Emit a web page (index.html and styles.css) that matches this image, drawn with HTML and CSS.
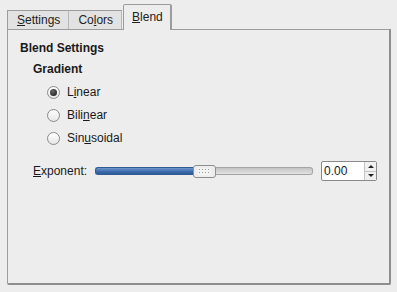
FILE: index.html
```html
<!doctype html>
<html lang="en">
<head>
	<meta charset="UTF-8">
	<title>Blend</title>
	<link rel="stylesheet" href="styles.css">
</head>
<body>
	<div id="notebook">
		<div class="tabs">
			<div class="tab"><u>S</u>ettings</div>
			<div class="tab">Co<u>l</u>ors</div>
			<div class="tab active"><u>B</u>lend</div>
		</div>
		<div class="panel">
			<div class="title">Blend Settings</div>
			<div class="group">
				<div class="subtitle">Gradient</div>
				<div class="radios">
					<label class="radio"><span class="dot checked"></span><span>L<u>i</u>near</span></label>
					<label class="radio"><span class="dot"></span><span>Bili<u>n</u>ear</span></label>
					<label class="radio"><span class="dot"></span><span>Sin<u>u</u>soidal</span></label>
				</div>
				<div class="row">
					<span class="label"><u>E</u>xponent:</span>
					<div class="scale">
						<div class="fill"></div>
						<div class="thumb"></div>
						<div class="rest"></div>
					</div>
					<div class="spin">
						<span class="value">0.00</span>
						<div class="arrows">
							<span class="up"></span>
							<span class="down"></span>
						</div>
					</div>
				</div>
			</div>
		</div>
	</div>
</body>
</html>
```
FILE: styles.css
```css
body{
	margin: 0;
	background: #ededed;
	font-family: "Liberation Sans", Arial, sans-serif;
	font-size: 12px;
	color: #1a1a1a;
}
#notebook{
	padding: 4px 6px 0 7px;
}
.tabs{
	display: flex;
	align-items: flex-end;
	height: 25px;
}
.tab{
	height: 19px;
	line-height: 19px;
	padding: 0 8px 0 9px;
	border: 1px solid #9c9c9c;
	border-bottom: none;
	border-right-color: #b8b8b8;
	background: #e2e2e2;
	box-sizing: border-box;
	color: #222;
}
.tab + .tab{
	border-left: none;
}
.tab.active{
	height: 26px;
	line-height: 24px;
	margin-bottom: -1px;
	margin-left: 1px;
	padding: 0 7px 0 8px;
	background: #ededed;
	border-left: 1px solid #9c9c9c;
	border-right: 2px solid #9c9c9c;
	border-radius: 2px 2px 0 0;
	position: relative;
	z-index: 1;
}
.panel{
	height: 256px;
	border: 1px solid #9c9c9c;
	border-right: 2px solid #8e8e8e;
	border-bottom: 2px solid #8e8e8e;
	border-radius: 0 0 2px 2px;
	box-sizing: border-box;
	padding: 11px 0 0 12px;
}
.title, .subtitle{
	font-weight: bold;
	line-height: 15px;
}
.group{
	padding-left: 13px;
	margin-top: 6px;
}
.radios{
	display: flex;
	flex-direction: column;
	gap: 9px;
	padding: 8px 0 0 14px;
}
.radio{
	display: flex;
	align-items: center;
	gap: 7px;
	height: 14px;
}
.dot{
	width: 11px;
	height: 11px;
	border: 1px solid #8a8a8a;
	border-radius: 50%;
	background: linear-gradient(#ffffff, #e6e6e6);
	display: flex;
	align-items: center;
	justify-content: center;
}
.dot.checked::after{
	content: "";
	width: 7px;
	height: 7px;
	border-radius: 50%;
	background: radial-gradient(circle at 40% 35%, #666, #111);
}
.row{
	display: flex;
	align-items: center;
	margin-top: 16px;
}
.label{
	width: 62px;
}
.scale{
	width: 218px;
	height: 14px;
	display: flex;
	align-items: center;
	margin-right: 8px;
}
.fill{
	width: 97px;
	height: 6px;
	border: 1px solid #2f5a94;
	border-right: none;
	border-radius: 3px 0 0 3px;
	background: linear-gradient(#6d96cc, #3d6aab 60%, #2e5a97);
}
.thumb{
	width: 23px;
	height: 13px;
	box-sizing: border-box;
	border: 1px solid #8e8e8e;
	border-radius: 3px;
	background-color: #f4f4f4;
	background-image: radial-gradient(#9a9a9a 0.6px, transparent 0.9px);
	background-size: 3px 3px;
	background-position: 4px 2px;
	background-clip: content-box;
	padding: 2px 4px;
}
.rest{
	flex: 1;
	height: 6px;
	border: 1px solid #a4a4a4;
	border-left: none;
	border-radius: 0 3px 3px 0;
	background: linear-gradient(#c4c4c4, #e2e2e2);
}
.spin{
	width: 56px;
	height: 20px;
	box-sizing: border-box;
	border: 1px solid #8a8a8a;
	border-radius: 2px;
	background: #fff;
	display: flex;
}
.value{
	flex: 1;
	line-height: 18px;
	padding-left: 2px;
	font-size: 12px;
}
.arrows{
	width: 11px;
	display: flex;
	flex-direction: column;
	border-left: 1px solid #c4c4c4;
	background: #f0f0f0;
}
.arrows span{
	flex: 1;
	display: flex;
	align-items: center;
	justify-content: center;
}
.up{
	border-bottom: 1px solid #c4c4c4;
}
.up::after{
	content: "";
	border: 3px solid transparent;
	border-bottom: 3px solid #222;
	border-top: none;
}
.down::after{
	content: "";
	border: 3px solid transparent;
	border-top: 3px solid #222;
	border-bottom: none;
}
```
